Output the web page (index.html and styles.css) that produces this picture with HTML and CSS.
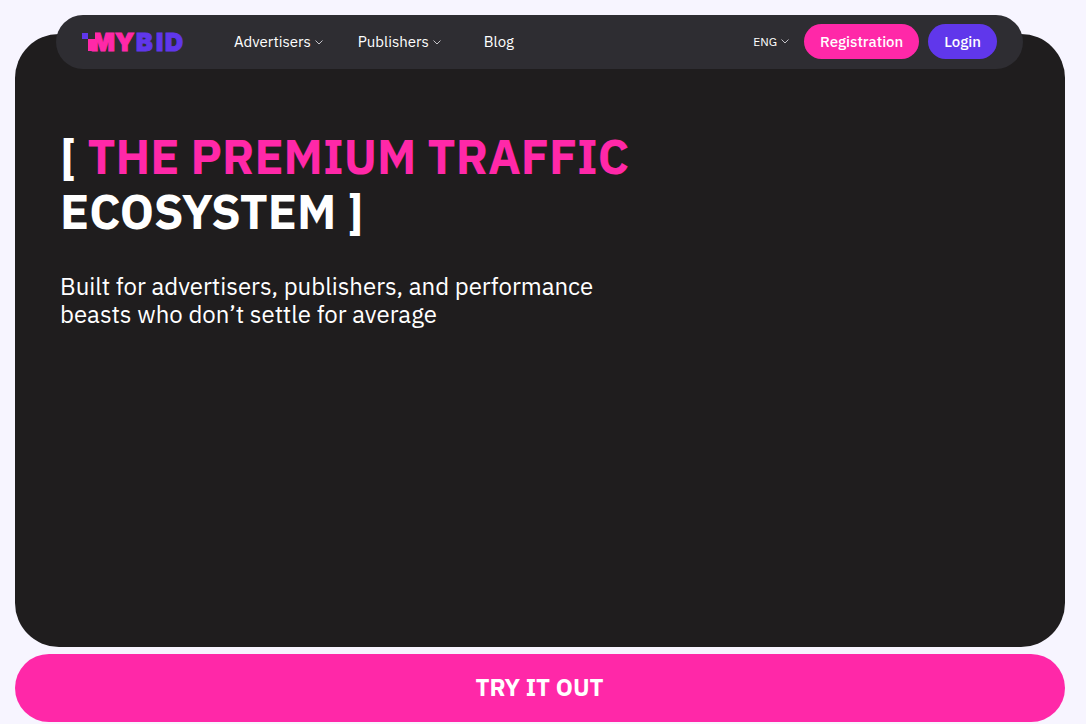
FILE: index.html
```html
<!DOCTYPE html>
<html lang="en">
<head>
<meta charset="utf-8">
<meta name="viewport" content="width=device-width, initial-scale=1">
<title>MyBid</title>
<link rel="stylesheet" href="styles.css">
</head>
<body>
<div class="page">
  <header class="header">
    <a class="logo" href="#" aria-label="MyBid">
      <svg class="logo-mark" width="102" height="18" viewBox="0 0 102 18">
        <text class="logo-text logo-pink" x="9 33" y="18">MY</text>
        <text class="logo-text logo-violet" x="54 74 83" y="18">BID</text>
        <rect class="logo-cut" x="5" y="-1" width="8" height="7"/>
        <rect class="logo-pink" x="6" y="6" width="7" height="12"/>
        <rect class="logo-violet" x="0" y="0" width="6" height="6"/>
      </svg>
    </a>
    <nav class="nav">
      <a class="nav-link" href="#">Advertisers<svg class="chevron" viewBox="0 0 8 5"><path d="M.5.5 4 4 7.500.5"/></svg></a>
      <a class="nav-link" href="#">Publishers<svg class="chevron" viewBox="0 0 8 5"><path d="M.5.5 4 4 7.500.5"/></svg></a>
      <a class="nav-link nav-link-plain" href="#">Blog</a>
    </nav>
    <div class="actions">
      <button class="lang" type="button">ENG<svg class="chevron" viewBox="0 0 8 5"><path d="M.5.5 4 4 7.500.5"/></svg></button>
      <a class="pill pill-pink" href="#">Registration</a>
      <a class="pill pill-violet" href="#">Login</a>
    </div>
  </header>
  <main>
    <section class="hero">
      <h1 class="title">[ <span class="accent">THE PREMIUM TRAFFIC</span><br>ECOSYSTEM ]</h1>
      <p class="lead">Built for advertisers, publishers, and performance<br>beasts who don’t settle for average</p>
    </section>
    <a class="cta" href="#">TRY IT OUT</a>
  </main>
</div>
</body>
</html>
```

FILE: styles.css
```css
* { box-sizing: border-box; }

body {
  margin: 0;
  background: #f7f5ff;
  color: #fff;
  font-family: "IBM Plex Sans", "Noto Sans", sans-serif;
}

a { color: inherit; text-decoration: none; }

.page {
  display: flex;
  flex-direction: column;
  min-height: 100vh;
  padding: 15px 21px 2px 15px;
}

.header {
  position: relative;
  z-index: 1;
  display: flex;
  align-items: center;
  height: 54px;
  margin: 0 42px -35px 41px;
  padding: 0 26px;
  border-radius: 27px;
  background: #2e2d32;
}

.logo { display: flex; }
.logo-mark { overflow: visible; }
.logo-text { font-family: Inter, sans-serif; font-size: 25px; font-weight: 900; }
.logo-pink { fill: #ff28a8; }
.logo-violet { fill: #6037eb; }
.logo-text.logo-pink { stroke: #ff28a8; }
.logo-text.logo-violet { stroke: #6037eb; }
.logo-cut { fill: #2e2d32; }

.nav {
  display: flex;
  gap: 35px;
  margin-left: 50px;
  font-size: 15px;
  line-height: 20px;
}

.nav-link, .lang { display: flex; align-items: center; gap: 4px; }
.nav-link-plain { padding: 0 8px; }

.chevron {
  width: 8px;
  height: 5px;
  fill: none;
  stroke: #c4c3c8;
}

.actions {
  display: flex;
  align-items: center;
  gap: 9px;
  margin-left: auto;
  padding-bottom: 1px;
}

.lang {
  margin-right: 6px;
  padding: 0;
  border: 0;
  background: none;
  color: inherit;
  font: 12px/16px "IBM Plex Sans", "Noto Sans", sans-serif;
}

.pill {
  padding: 0 16px;
  border-radius: 18px;
  font-size: 15px;
  font-weight: 500;
  line-height: 35px;
}

.pill-pink { background: #ff28a8; }
.pill-violet { background: #6037eb; }

main {
  display: flex;
  flex: 1;
  flex-direction: column;
  gap: 7px;
}

.hero {
  flex: 1;
  padding: 95px 45px 45px;
  border-radius: 44px;
  background: #1f1d1e;
}

.title {
  margin: 0 0 33px;
  font-size: 48px;
  font-weight: 700;
  line-height: 55px;
}

.accent { color: #ff28a8; }

.lead {
  margin: 0;
  font-size: 24px;
  line-height: 28px;
}

.cta {
  padding: 16px 17px 18px 16px;
  border-radius: 34px;
  background: #ff28a8;
  font-size: 24px;
  font-weight: 700;
  line-height: 34px;
  text-align: center;
}
```
